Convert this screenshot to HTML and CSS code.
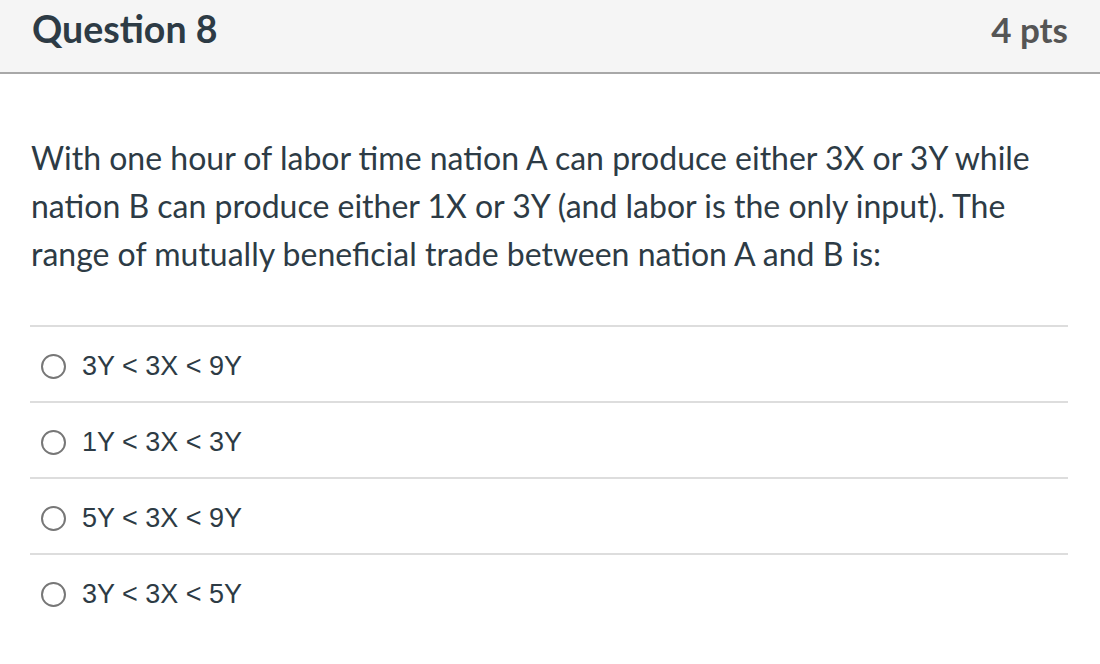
FILE: index.html
```html
<!DOCTYPE html>
<html>
<head>
<meta charset="utf-8">
<link rel="stylesheet" href="styles.css">
</head>
<body>
<div class="question">
  <div class="q-header">
    <h2 class="q-title">Question 8</h2>
    <div class="q-points">4 pts</div>
  </div>
  <div class="q-text">With one hour of labor time nation A can produce either 3X or 3Y while nation B can produce either 1X or 3Y (and labor is the only input). The range of mutually beneficial trade between nation A and B is:</div>
  <div class="answers">
    <label class="answer"><span class="radio"></span><span class="answer-text">3Y &lt; 3X &lt; 9Y</span></label>
    <label class="answer"><span class="radio"></span><span class="answer-text">1Y &lt; 3X &lt; 3Y</span></label>
    <label class="answer"><span class="radio"></span><span class="answer-text">5Y &lt; 3X &lt; 9Y</span></label>
    <label class="answer"><span class="radio"></span><span class="answer-text">3Y &lt; 3X &lt; 5Y</span></label>
  </div>
</div>
</body>
</html>
```

FILE: styles.css
```css
html, body {
  margin: 0;
  padding: 0;
  background: #ffffff;
}
.question {
  font-family: Lato, "Noto Sans", sans-serif;
  color: #2d3b45;
}
.q-header {
  display: flex;
  justify-content: space-between;
  align-items: baseline;
  box-sizing: border-box;
  padding: 10px 32px 0 32px;
  background: #f5f5f5;
  border-bottom: 2px solid #a8a8a8;
  height: 74px;
}
.q-title {
  margin: 0;
  font-size: 37.5px;
  font-weight: 700;
  color: #2d3b45;
  line-height: 1;
}
.q-points {
  font-size: 35px;
  font-weight: 700;
  color: #555555;
  line-height: 1;
}
.q-text {
  margin: 60px 30px 0 31px;
  font-size: 32px;
  line-height: 48px;
}
.answers {
  margin: 47px 32px 0 30px;
}
.answer {
  display: flex;
  align-items: center;
  border-top: 2px solid #dddddd;
  padding-left: 11px;
  padding-top: 4px;
  box-sizing: border-box;
  height: 76px;
}
.radio {
  width: 21px;
  height: 21px;
  border: 2px solid #777777;
  border-radius: 50%;
  flex: none;
}
.answer-text {
  margin-left: 16px;
  font-family: "Liberation Sans", Arial, sans-serif;
  font-size: 27px;
  color: #2d3b45;
}
```
